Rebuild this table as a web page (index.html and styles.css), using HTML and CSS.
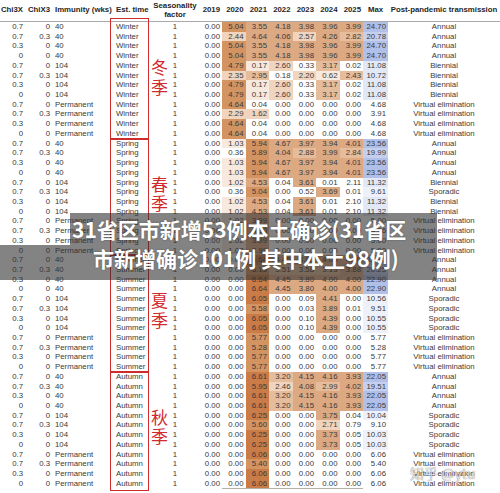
FILE: index.html
```html
<!DOCTYPE html>
<html lang="en">
<head>
<meta charset="utf-8">
<title>Seasonality table</title>
<link rel="stylesheet" href="styles.css">
</head>
<body>
<div class="sheet">
  <div class="head">
    <span>Chi3X</span><span>ChiX3</span><span class="l">Immunity (wks)</span><span class="l">Est. time</span><span class="c">Seasonality<br>factor</span><span>2019</span><span>2020</span><span>2021</span><span>2022</span><span>2023</span><span>2024</span><span>2025</span><span class="c">Max</span><span class="c">Post-pandemic transmission</span>
  </div>

  <div class="group">
    <div class="row"><span>0.7</span><span>0</span><span class="l">40</span><span class="l">Winter</span><span class="c">1</span><span>0.00</span><span class="h5">5.04</span><span class="h4">3.55</span><span class="h4">4.18</span><span class="h4">3.98</span><span class="h4">3.96</span><span class="h4">3.99</span><span class="b4">24.70</span><span class="c">Annual</span></div>
    <div class="row"><span>0.7</span><span>0.3</span><span class="l">40</span><span class="l">Winter</span><span class="c">1</span><span>0.00</span><span class="h2">2.44</span><span class="h4">4.64</span><span class="h4">4.06</span><span class="h2">2.57</span><span class="h4">4.26</span><span class="h3">2.82</span><span class="b3">20.78</span><span class="c">Annual</span></div>
    <div class="row"><span>0.3</span><span>0</span><span class="l">40</span><span class="l">Winter</span><span class="c">1</span><span>0.00</span><span class="h5">5.04</span><span class="h4">3.55</span><span class="h4">4.18</span><span class="h4">3.98</span><span class="h4">3.96</span><span class="h4">3.99</span><span class="b4">24.70</span><span class="c">Annual</span></div>
    <div class="row"><span>0</span><span>0</span><span class="l">40</span><span class="l">Winter</span><span class="c">1</span><span>0.00</span><span class="h5">5.04</span><span class="h4">3.55</span><span class="h4">4.18</span><span class="h4">3.98</span><span class="h4">3.96</span><span class="h4">3.99</span><span class="b4">24.70</span><span class="c">Annual</span></div>
    <div class="row"><span>0.7</span><span>0</span><span class="l">104</span><span class="l">Winter</span><span class="c">1</span><span>0.00</span><span class="h5">4.79</span><span class="h1">0.17</span><span class="h2">2.60</span><span>0.33</span><span class="h3">3.17</span><span>0.02</span><span class="b2">11.08</span><span class="c">Biennial</span></div>
    <div class="row"><span>0.7</span><span>0.3</span><span class="l">104</span><span class="l">Winter</span><span class="c">1</span><span>0.00</span><span class="h2">2.35</span><span class="h3">2.95</span><span>0.18</span><span class="h2">2.20</span><span class="h1">0.62</span><span class="h3">2.43</span><span class="b2">10.72</span><span class="c">Biennial</span></div>
    <div class="row"><span>0.3</span><span>0</span><span class="l">104</span><span class="l">Winter</span><span class="c">1</span><span>0.00</span><span class="h5">4.79</span><span class="h1">0.17</span><span class="h2">2.60</span><span>0.33</span><span class="h3">3.17</span><span>0.02</span><span class="b2">11.08</span><span class="c">Biennial</span></div>
    <div class="row"><span>0</span><span>0</span><span class="l">104</span><span class="l">Winter</span><span class="c">1</span><span>0.00</span><span class="h5">4.79</span><span class="h1">0.17</span><span class="h2">2.60</span><span>0.33</span><span class="h3">3.17</span><span>0.02</span><span class="b2">11.08</span><span class="c">Biennial</span></div>
    <div class="row"><span>0.7</span><span>0</span><span class="l">Permanent</span><span class="l">Winter</span><span class="c">1</span><span>0.00</span><span class="h5">4.64</span><span>0.04</span><span>0.00</span><span>0.00</span><span>0.00</span><span>0.00</span><span>4.68</span><span class="c">Virtual elimination</span></div>
    <div class="row"><span>0.7</span><span>0.3</span><span class="l">Permanent</span><span class="l">Winter</span><span class="c">1</span><span>0.00</span><span class="h2">2.29</span><span class="h2">1.62</span><span>0.00</span><span>0.00</span><span>0.00</span><span>0.00</span><span>3.91</span><span class="c">Virtual elimination</span></div>
    <div class="row"><span>0.3</span><span>0</span><span class="l">Permanent</span><span class="l">Winter</span><span class="c">1</span><span>0.00</span><span class="h5">4.64</span><span>0.04</span><span>0.00</span><span>0.00</span><span>0.00</span><span>0.00</span><span>4.68</span><span class="c">Virtual elimination</span></div>
    <div class="row"><span>0</span><span>0</span><span class="l">Permanent</span><span class="l">Winter</span><span class="c">1</span><span>0.00</span><span class="h5">4.64</span><span>0.04</span><span>0.00</span><span>0.00</span><span>0.00</span><span>0.00</span><span>4.68</span><span class="c">Virtual elimination</span></div>
    <div class="mark first"></div>
    <div class="season">冬<br>季</div>
  </div>

  <div class="group">
    <div class="row"><span>0.7</span><span>0</span><span class="l">40</span><span class="l">Spring</span><span class="c">1</span><span>0.00</span><span class="h1">1.03</span><span class="h5">5.94</span><span class="h4">4.67</span><span class="h4">3.97</span><span class="h4">3.94</span><span class="h4">4.01</span><span class="b4">23.56</span><span class="c">Annual</span></div>
    <div class="row"><span>0.7</span><span>0.3</span><span class="l">40</span><span class="l">Spring</span><span class="c">1</span><span>0.00</span><span class="h0">0.36</span><span class="h5">5.89</span><span class="h4">4.04</span><span class="h3">2.88</span><span class="h4">3.99</span><span class="h3">2.84</span><span class="b3">19.99</span><span class="c">Annual</span></div>
    <div class="row"><span>0.3</span><span>0</span><span class="l">40</span><span class="l">Spring</span><span class="c">1</span><span>0.00</span><span class="h1">1.03</span><span class="h5">5.94</span><span class="h4">4.67</span><span class="h4">3.97</span><span class="h4">3.94</span><span class="h4">4.01</span><span class="b4">23.56</span><span class="c">Annual</span></div>
    <div class="row"><span>0</span><span>0</span><span class="l">40</span><span class="l">Spring</span><span class="c">1</span><span>0.00</span><span class="h1">1.03</span><span class="h5">5.94</span><span class="h4">4.67</span><span class="h4">3.97</span><span class="h4">3.94</span><span class="h4">4.01</span><span class="b4">23.56</span><span class="c">Annual</span></div>
    <div class="row"><span>0.7</span><span>0</span><span class="l">104</span><span class="l">Spring</span><span class="c">1</span><span>0.00</span><span class="h1">1.02</span><span class="h4">4.53</span><span>0.04</span><span class="h4">3.61</span><span>0.01</span><span>2.11</span><span class="b2">11.32</span><span class="c">Biennial</span></div>
    <div class="row"><span>0.7</span><span>0.3</span><span class="l">104</span><span class="l">Spring</span><span class="c">1</span><span>0.00</span><span>0.36</span><span class="h5">5.04</span><span>0.00</span><span>0.52</span><span class="h4">3.69</span><span>0.01</span><span class="b1">9.61</span><span class="c">Sporadic</span></div>
    <div class="row"><span>0.3</span><span>0</span><span class="l">104</span><span class="l">Spring</span><span class="c">1</span><span>0.00</span><span class="h1">1.02</span><span class="h4">4.53</span><span>0.04</span><span class="h4">3.61</span><span>0.01</span><span>2.10</span><span class="b2">11.32</span><span class="c">Biennial</span></div>
    <div class="row"><span>0</span><span>0</span><span class="l">104</span><span class="l">Spring</span><span class="c">1</span><span>0.00</span><span class="h1">1.02</span><span class="h4">4.53</span><span>0.04</span><span class="h4">3.61</span><span>0.01</span><span>2.10</span><span class="b2">11.32</span><span class="c">Biennial</span></div>
    <div class="row"><span>0.7</span><span>0</span><span class="l">Permanent</span><span class="l">Spring</span><span class="c">1</span><span>0.00</span><span class="h1">1.02</span><span class="h4">3.99</span><span>0.00</span><span>0.00</span><span>0.00</span><span>0.00</span><span>5.00</span><span class="c">Virtual elimination</span></div>
    <div class="row"><span>0.7</span><span>0.3</span><span class="l">Permanent</span><span class="l">Spring</span><span class="c">1</span><span>0.00</span><span>0.36</span><span class="h4">4.30</span><span>0.00</span><span>0.00</span><span>0.00</span><span>0.00</span><span>4.66</span><span class="c">Virtual elimination</span></div>
    <div class="row"><span>0.3</span><span>0</span><span class="l">Permanent</span><span class="l">Spring</span><span class="c">1</span><span>0.00</span><span class="h1">1.02</span><span class="h4">3.99</span><span>0.00</span><span>0.00</span><span>0.00</span><span>0.00</span><span>5.00</span><span class="c">Virtual elimination</span></div>
    <div class="row"><span>0</span><span>0</span><span class="l">Permanent</span><span class="l">Spring</span><span class="c">1</span><span>0.00</span><span class="h1">1.02</span><span class="h4">3.99</span><span>0.00</span><span>0.00</span><span>0.00</span><span>0.00</span><span>5.00</span><span class="c">Virtual elimination</span></div>
    <div class="mark"></div>
    <div class="season">春<br>季</div>
  </div>

  <div class="group">
    <div class="row"><span>0.7</span><span>0</span><span class="l">40</span><span class="l">Summer</span><span class="c">1</span><span>0.00</span><span>0.00</span><span class="h6">6.64</span><span class="h4">4.45</span><span class="h4">3.80</span><span class="h4">4.00</span><span class="h4">4.00</span><span class="b4">22.90</span><span class="c">Annual</span></div>
    <div class="row"><span>0.7</span><span>0.3</span><span class="l">40</span><span class="l">Summer</span><span class="c">1</span><span>0.00</span><span>0.00</span><span class="h5">6.15</span><span class="h3">3.51</span><span class="h3">3.58</span><span class="h3">3.13</span><span class="h4">3.88</span><span class="b3">20.25</span><span class="c">Annual</span></div>
    <div class="row"><span>0.3</span><span>0</span><span class="l">40</span><span class="l">Summer</span><span class="c">1</span><span>0.00</span><span>0.00</span><span class="h6">6.64</span><span class="h4">4.45</span><span class="h4">3.80</span><span class="h4">4.00</span><span class="h4">4.00</span><span class="b4">22.90</span><span class="c">Annual</span></div>
    <div class="row"><span>0</span><span>0</span><span class="l">40</span><span class="l">Summer</span><span class="c">1</span><span>0.00</span><span>0.00</span><span class="h6">6.64</span><span class="h4">4.45</span><span class="h4">3.80</span><span class="h4">4.00</span><span class="h4">4.00</span><span class="b4">22.90</span><span class="c">Annual</span></div>
    <div class="row"><span>0.7</span><span>0</span><span class="l">104</span><span class="l">Summer</span><span class="c">1</span><span>0.00</span><span>0.00</span><span class="h6">6.05</span><span>0.00</span><span>0.09</span><span class="h4">4.41</span><span>0.00</span><span class="b1">10.56</span><span class="c">Sporadic</span></div>
    <div class="row"><span>0.7</span><span>0.3</span><span class="l">104</span><span class="l">Summer</span><span class="c">1</span><span>0.00</span><span>0.00</span><span class="h5">5.58</span><span>0.00</span><span>0.03</span><span class="h4">3.89</span><span>0.01</span><span class="b1">9.51</span><span class="c">Sporadic</span></div>
    <div class="row"><span>0.3</span><span>0</span><span class="l">104</span><span class="l">Summer</span><span class="c">1</span><span>0.00</span><span>0.00</span><span class="h6">6.05</span><span>0.00</span><span>0.10</span><span class="h4">4.39</span><span>0.00</span><span class="b1">10.55</span><span class="c">Sporadic</span></div>
    <div class="row"><span>0</span><span>0</span><span class="l">104</span><span class="l">Summer</span><span class="c">1</span><span>0.00</span><span>0.00</span><span class="h6">6.05</span><span>0.00</span><span>0.10</span><span class="h4">4.39</span><span>0.00</span><span class="b1">10.55</span><span class="c">Sporadic</span></div>
    <div class="row"><span>0.7</span><span>0</span><span class="l">Permanent</span><span class="l">Summer</span><span class="c">1</span><span>0.00</span><span>0.00</span><span class="h5">5.77</span><span>0.00</span><span>0.00</span><span>0.00</span><span>0.00</span><span>5.77</span><span class="c">Virtual elimination</span></div>
    <div class="row"><span>0.7</span><span>0.3</span><span class="l">Permanent</span><span class="l">Summer</span><span class="c">1</span><span>0.00</span><span>0.00</span><span class="h5">5.28</span><span>0.00</span><span>0.00</span><span>0.00</span><span>0.00</span><span>5.28</span><span class="c">Virtual elimination</span></div>
    <div class="row"><span>0.3</span><span>0</span><span class="l">Permanent</span><span class="l">Summer</span><span class="c">1</span><span>0.00</span><span>0.00</span><span class="h5">5.77</span><span>0.00</span><span>0.00</span><span>0.00</span><span>0.00</span><span>5.77</span><span class="c">Virtual elimination</span></div>
    <div class="row"><span>0</span><span>0</span><span class="l">Permanent</span><span class="l">Summer</span><span class="c">1</span><span>0.00</span><span>0.00</span><span class="h5">5.77</span><span>0.00</span><span>0.00</span><span>0.00</span><span>0.00</span><span>5.77</span><span class="c">Virtual elimination</span></div>
    <div class="mark"></div>
    <div class="season">夏<br>季</div>
  </div>

  <div class="group">
    <div class="row"><span>0.7</span><span>0</span><span class="l">40</span><span class="l">Autumn</span><span class="c">1</span><span>0.00</span><span>0.00</span><span class="h6">6.61</span><span class="h3">3.20</span><span class="h4">4.15</span><span class="h4">4.16</span><span class="h4">3.93</span><span class="b4">22.05</span><span class="c">Annual</span></div>
    <div class="row"><span>0.7</span><span>0.3</span><span class="l">40</span><span class="l">Autumn</span><span class="c">1</span><span>0.00</span><span>0.00</span><span class="h6">5.95</span><span class="h2">2.46</span><span class="h4">4.08</span><span class="h3">2.99</span><span class="h4">4.02</span><span class="b3">19.51</span><span class="c">Annual</span></div>
    <div class="row"><span>0.3</span><span>0</span><span class="l">40</span><span class="l">Autumn</span><span class="c">1</span><span>0.00</span><span>0.00</span><span class="h6">6.61</span><span class="h3">3.20</span><span class="h4">4.15</span><span class="h4">4.16</span><span class="h4">3.93</span><span class="b4">22.05</span><span class="c">Annual</span></div>
    <div class="row"><span>0</span><span>0</span><span class="l">40</span><span class="l">Autumn</span><span class="c">1</span><span>0.00</span><span>0.00</span><span class="h6">6.61</span><span class="h3">3.20</span><span class="h4">4.15</span><span class="h4">4.16</span><span class="h4">3.93</span><span class="b4">22.05</span><span class="c">Annual</span></div>
    <div class="row"><span>0.7</span><span>0</span><span class="l">104</span><span class="l">Autumn</span><span class="c">1</span><span>0.00</span><span>0.00</span><span class="h6">6.25</span><span>0.00</span><span>0.00</span><span class="h4">3.75</span><span>0.04</span><span class="b1">10.04</span><span class="c">Sporadic</span></div>
    <div class="row"><span>0.7</span><span>0.3</span><span class="l">104</span><span class="l">Autumn</span><span class="c">1</span><span>0.00</span><span>0.00</span><span class="h5">5.60</span><span>0.00</span><span>0.00</span><span class="h2">2.71</span><span class="h0">0.79</span><span class="b0">9.10</span><span class="c">Sporadic</span></div>
    <div class="row"><span>0.3</span><span>0</span><span class="l">104</span><span class="l">Autumn</span><span class="c">1</span><span>0.00</span><span>0.00</span><span class="h6">6.25</span><span>0.00</span><span>0.00</span><span class="h4">3.73</span><span>0.05</span><span class="b1">10.03</span><span class="c">Sporadic</span></div>
    <div class="row"><span>0</span><span>0</span><span class="l">104</span><span class="l">Autumn</span><span class="c">1</span><span>0.00</span><span>0.00</span><span class="h6">6.25</span><span>0.00</span><span>0.00</span><span class="h4">3.73</span><span>0.05</span><span class="b1">10.03</span><span class="c">Sporadic</span></div>
    <div class="row"><span>0.7</span><span>0</span><span class="l">Permanent</span><span class="l">Autumn</span><span class="c">1</span><span>0.00</span><span>0.00</span><span class="h6">6.06</span><span>0.00</span><span>0.00</span><span>0.00</span><span>0.00</span><span>6.06</span><span class="c">Virtual elimination</span></div>
    <div class="row"><span>0.7</span><span>0.3</span><span class="l">Permanent</span><span class="l">Autumn</span><span class="c">1</span><span>0.00</span><span>0.00</span><span class="h5">5.40</span><span>0.00</span><span>0.00</span><span>0.00</span><span>0.00</span><span>5.40</span><span class="c">Virtual elimination</span></div>
    <div class="row"><span>0.3</span><span>0</span><span class="l">Permanent</span><span class="l">Autumn</span><span class="c">1</span><span>0.00</span><span>0.00</span><span class="h6">6.06</span><span>0.00</span><span>0.00</span><span>0.00</span><span>0.00</span><span>6.06</span><span class="c">Virtual elimination</span></div>
    <div class="row last"><span>0</span><span>0</span><span class="l">Permanent</span><span class="l">Autumn</span><span class="c">1</span><span>0.00</span><span>0.00</span><span class="h6">6.06</span><span>0.00</span><span>0.00</span><span>0.00</span><span>0.00</span><span>6.06</span><span class="c">Virtual elimination</span></div>
    <div class="mark final"></div>
    <div class="season">秋<br>季</div>
  </div>

  <div class="caption">
    <div class="cap-line one">31省区市新增53例本土确诊(31省区</div>
    <div class="cap-line two">市新增确诊101例 其中本土98例)</div>
  </div>
  <div class="watermark">知乎 @ytu</div>
</div>
</body>
</html>
```

FILE: styles.css
```css
* { box-sizing: border-box; }

html, body {
  margin: 0;
  padding: 0;
  background: #ffffff;
}

.sheet {
  position: relative;
  width: 500px;
  height: 493px;
  overflow: hidden;
  font-family: "Liberation Sans", Arial, sans-serif;
  font-size: 7.8px;
  color: #3a3a3a;
}

.head,
.row {
  display: grid;
  grid-template-columns: 25px 27px 61px 37px 50px 22px 23.5px 23.5px 23.5px 23.5px 23.5px 23.5px 25px 112px;
}

.head {
  height: 22px;
  align-items: center;
  border-bottom: 1px solid #a9a9a9;
  font-weight: bold;
  color: #262626;
  line-height: 8.4px;
}

.head span,
.row span {
  text-align: right;
  padding-right: 2px;
  white-space: nowrap;
}

.head .l,
.row .l {
  text-align: left;
  padding-left: 3px;
  padding-right: 0;
}

.head .c,
.row .c {
  text-align: center;
  padding-right: 0;
}

.row {
  height: 9.72px;
  line-height: 9.72px;
}

.row span { height: 9.72px; }

.row.last span:nth-child(n+7):nth-child(-n+12) {
  border-bottom: 1px solid #b9b0a8;
}

.group { position: relative; }

/* heat-map levels */
.h0 { background: transparent; }
.h1 { background: #f8e9de; }
.h2 { background: #f0d4be; }
.h3 { background: #e6bd9c; }
.h4 { background: #dca983; }
.h5 { background: #d39462; }
.h6 { background: #c97c47; }

/* max column levels */
.b0 { background: transparent; }
.b1 { background: #eef1f9; }
.b2 { background: #e3e8f6; }
.b3 { background: #c6d0ee; }
.b4 { background: #b1c0e9; }

/* red annotation boxes */
.mark {
  position: absolute;
  left: 110px;
  width: 38.5px;
  top: 0;
  bottom: 0;
  border: 1.6px solid #cf2a2c;
  pointer-events: none;
}

.mark.first { top: -4px; }
.mark.final { bottom: -2px; }

.season {
  position: absolute;
  left: 151px;
  top: 35px;
  font-family: "Noto Sans CJK SC", "Noto Sans CJK JP", sans-serif;
  font-size: 17px;
  line-height: 19.5px;
  color: #d2292c;
}

/* caption overlay */
.caption {
  position: absolute;
  left: 0;
  top: 213px;
  width: 437px;
  font-family: "Noto Sans CJK SC", "Noto Sans CJK JP", sans-serif;
  font-weight: bold;
  font-size: 21px;
  color: #ffffff;
  white-space: nowrap;
  text-shadow: 0 0 2px rgba(0, 0, 0, 0.35);
}

.cap-line {
  background: rgba(48, 48, 48, 0.6);
}

.cap-line.one {
  margin-left: 70px;
  height: 32px;
  padding-top: 2px;
  padding-left: 2px;
  line-height: 29px;
}

.cap-line.two {
  height: 35px;
  padding-left: 93px;
  line-height: 26px;
}

.watermark {
  position: absolute;
  left: 410px;
  top: 464px;
  font-family: "Noto Sans CJK SC", "Noto Sans CJK JP", sans-serif;
  font-size: 14px;
  line-height: 18px;
  color: rgba(255, 255, 255, 0.75);
  text-shadow: 0 0 1px rgba(60, 60, 60, 0.8);
  white-space: nowrap;
}
```
